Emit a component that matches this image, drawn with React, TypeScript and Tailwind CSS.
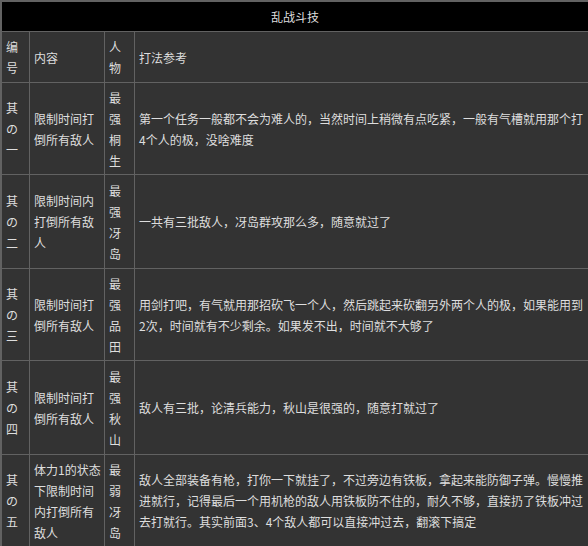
import React from "react"

type Row = {
  no: string[]
  content: string[]
  who: string[]
  tips: string[]
  h: string
}

const ROWS: Row[] = [
  {
    no: ["其", "の", "一"],
    content: ["限制时间打", "倒所有敌人"],
    who: ["最", "强", "桐", "生"],
    tips: [
      "第一个任务一般都不会为难人的，当然时间上稍微有点吃紧，一般有气槽就用那个打",
      "4个人的极，没啥难度",
    ],
    h: "h-[91px]",
  },
  {
    no: ["其", "の", "二"],
    content: ["限制时间内", "打倒所有敌", "人"],
    who: ["最", "强", "冴", "岛"],
    tips: ["一共有三批敌人，冴岛群攻那么多，随意就过了"],
    h: "h-[93px]",
  },
  {
    no: ["其", "の", "三"],
    content: ["限制时间打", "倒所有敌人"],
    who: ["最", "强", "品", "田"],
    tips: [
      "用剑打吧，有气就用那招砍飞一个人，然后跳起来砍翻另外两个人的极，如果能用到",
      "2次，时间就有不少剩余。如果发不出，时间就不大够了",
    ],
    h: "h-[91px]",
  },
  {
    no: ["其", "の", "四"],
    content: ["限制时间打", "倒所有敌人"],
    who: ["最", "强", "秋", "山"],
    tips: ["敌人有三批，论清兵能力，秋山是很强的，随意打就过了"],
    h: "h-[93px]",
  },
  {
    no: ["其", "の", "五"],
    content: ["体力1的状态", "下限制时间", "内打倒所有", "敌人"],
    who: ["最", "弱", "冴", "岛"],
    tips: [
      "敌人全部装备有枪，打你一下就挂了，不过旁边有铁板，拿起来能防御子弹。慢慢推",
      "进就行，记得最后一个用机枪的敌人用铁板防不住的，耐久不够，直接扔了铁板冲过",
      "去打就行。其实前面3、4个敌人都可以直接冲过去，翻滚下搞定",
    ],
    h: "h-[91px]",
  },
]

function Cell({ lines, h }: { lines: string[]; h: string }) {
  return (
    <div className={`${h} flex flex-col justify-center bg-[#333333] pl-1`}>
      {lines.map((l, i) => (
        <span key={i} className="whitespace-nowrap leading-[21px]">
          {l}
        </span>
      ))}
    </div>
  )
}

export default function App() {
  return (
    <div
      className="h-[546px] w-[588px] overflow-hidden bg-[#5c5c5c] text-[12px] text-[#dedede]"
      style={{ fontFamily: '"Noto Sans CJK SC", "Noto Sans", sans-serif' }}
    >
      <div className="grid grid-cols-[27px_74px_29px_1fr] gap-px bg-[#626262] pl-[2px] pt-[2px]">
        <div className="col-span-4 flex h-[29px] items-center justify-center bg-black">
          乱战斗技
        </div>

        <Cell lines={["编", "号"]} h="h-[50px]" />
        <Cell lines={["内容"]} h="h-[50px]" />
        <Cell lines={["人", "物"]} h="h-[50px]" />
        <Cell lines={["打法参考"]} h="h-[50px]" />

        {ROWS.map((r, i) => (
          <React.Fragment key={i}>
            <Cell lines={r.no} h={r.h} />
            <Cell lines={r.content} h={r.h} />
            <Cell lines={r.who} h={r.h} />
            <Cell lines={r.tips} h={r.h} />
          </React.Fragment>
        ))}
      </div>
    </div>
  )
}
